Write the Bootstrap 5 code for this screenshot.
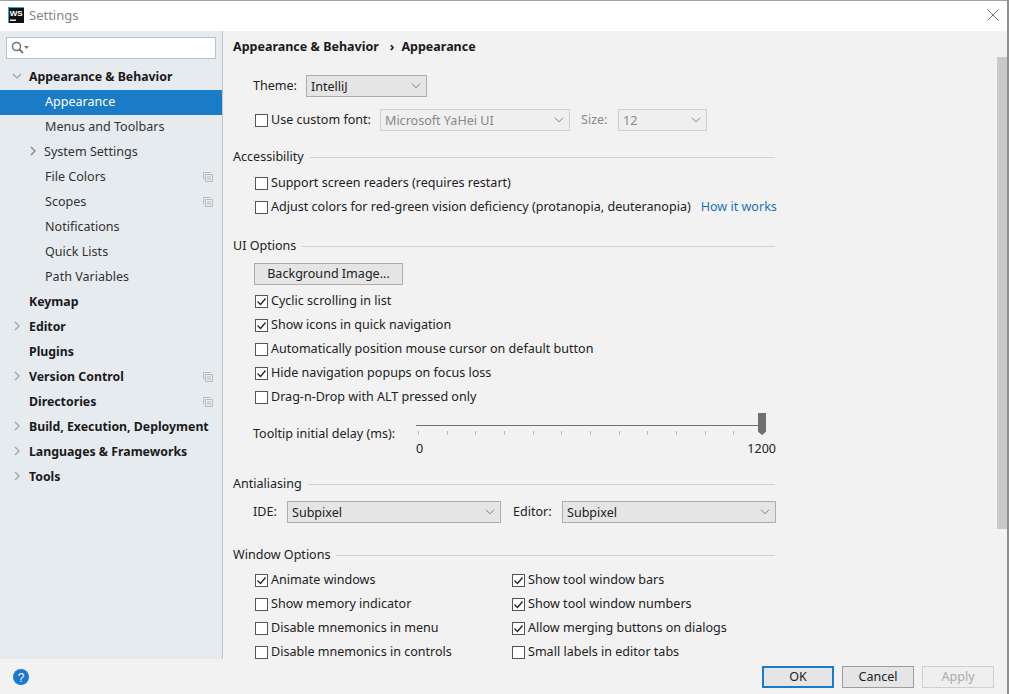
<!DOCTYPE html>
<html lang="en"><head><meta charset="utf-8"><title>Settings</title>
<link href="https://cdn.jsdelivr.net/npm/bootstrap@5.3.0/dist/css/bootstrap.min.css" rel="stylesheet">
<style>
html,body{height:694px;overflow:hidden;background:#8e8e8e}
body{font:12.55px/18px "Noto Sans","Open Sans",sans-serif;color:#222}
.ij-win{width:1007px;height:694px;background:#f2f2f2;border-top:1px solid #a0a0a0}
.ij-title{height:30px;background:#fff;color:#888;font-size:13px;padding:0 0 2px 8px;gap:5px}
.ij-close{margin-left:auto;margin-right:8px}
.ij-main{height:628px}
.ij-side{width:223px;flex:none;background:#e6ebf0;border-right:1px solid #c4c4c4}
.ij-search{margin:6px 6px 5px;width:210px;height:22px;position:relative}
.ij-search .form-control{height:22px;border:1px solid #c0c0c0;border-radius:0;padding:0 0 0 24px;background:#fff;min-height:0}
.ij-search svg{position:absolute;left:5px;top:4px}
.ij-tree{background:transparent;border-radius:0}
.ij-tree .list-group-item{height:25px;padding:0 6px 0 45px;background:transparent;border:0;border-radius:0;display:flex;align-items:center;font-size:12.55px;line-height:25px;color:#333;position:relative;white-space:nowrap}
.ij-tree .list-group-item.active{background:#1a7cc6;color:#fff;margin-top:1px;padding-bottom:2px}
.ij-tree .list-group-item.active + .list-group-item{margin-top:-1px}
.ij-tree .ij-top{padding-left:29px;font-weight:700;color:#1a1a1a;font-size:12.3px}
.ij-tree .ij-exp{padding-left:44px}
.ij-tree svg.ij-arrow{position:absolute;top:7px}
.ij-tree svg.ij-copy{margin-left:auto;margin-right:3px;flex:none}
.ij-body{flex:1;min-width:0;position:relative;overflow:hidden;padding:7px 0 0 10px}
.ij-crumb{font-weight:700;height:18px;line-height:18px;color:#1a1a1a;gap:7px;font-size:12.5px}
.ij-pane{width:542px;padding-left:20px}
.ij-sec{height:18px;margin-left:-20px;gap:6px;line-height:18px}
.ij-sec::after{content:"";flex:1;border-top:1px solid #d0d0d0}
.ij-row{height:24px;gap:3px}
.ij-row .form-check-input{width:13px;height:13px;margin:0 0 0 2px;flex:none;border:1px solid #555;border-radius:0;background-color:#fff;float:none}
.ij-row .form-check-input:checked{background-color:#fff;border-color:#555;background-image:url("data:image/svg+xml,%3csvg xmlns='http://www.w3.org/2000/svg' viewBox='0 0 13 13'%3e%3cpath d='M2.5 6.500l3 3 5-6' fill='none' stroke='%23222' stroke-width='1.3'/%3e%3c/svg%3e");background-size:13px 13px}
.ij-row label{white-space:nowrap;margin:0}
.ij-fixlabel{flex:none;white-space:nowrap}
.form-select.ij-sel{height:22px;min-height:0;padding:1px 0 0 4px;border:1px solid #adadad;border-radius:0;background-color:#e5e5e5;font-size:12.55px;line-height:20px;color:#222;flex:none;background-image:url("data:image/svg+xml,%3csvg xmlns='http://www.w3.org/2000/svg' viewBox='0 0 11 6'%3e%3cpath d='M1 .5l4.500 4.500 4.500-4.500' fill='none' stroke='%23777'/%3e%3c/svg%3e");background-size:10px 6px;background-position:right 5px center}
.form-select.ij-sel:disabled{background-color:#efefef;border-color:#d0d0d0;color:#888;opacity:1}
.ij-dim{color:#888}
.ij-link{color:#1a73b8;text-decoration:none;margin-left:7px;white-space:nowrap}
.btn.ij-btn{height:22px;padding:0;margin-left:1px;border:1px solid #adadad;border-radius:0;background:#e5e5e5;font-size:12.55px;line-height:20px;color:#222}
.ij-slider{width:360px;height:46px;position:relative;flex:none}
.ij-track{height:1px;background:#707070;margin:12px 10px 0 0}
.ij-ticks{height:5px;margin-top:5px;padding-right:13px;padding-left:2px}
.ij-ticks i{width:1px;height:4px;background:#bbb;display:block}
.ij-thumb{position:absolute;right:10px;top:0;width:8px;height:22px;background:#6f6f6f;clip-path:polygon(0 0,100% 0,100% 85%,50% 100%,0 85%)}
.ij-scale{margin-top:4px;line-height:18px}
.ij-scroll{position:absolute;right:0;top:26px;width:10px;height:472px;background:#c9c9c9}
.ij-foot{height:35px;background:#f2f2f2;padding-right:13px;gap:8px}
.btn.ij-act{width:72px;height:22px;padding:0;border:1px solid #9c9c9c;border-radius:0;background:#e5e5e5;font-size:12.55px;line-height:20px;color:#222}
.btn.ij-ok{border:2px solid #1a7cc6;line-height:18px}
.btn.ij-act:disabled{border-color:#d0d0d0;background:#efefef;color:#aaa;opacity:1}
.ij-help{margin-left:13px;margin-right:auto}
.ij-col{width:257px;flex:none}
.ij-gap-theme{height:22px;margin-top:19px}
.ij-gap-font{height:22px;margin-top:12px}
.ij-gap-pick{height:22px;margin-top:8px}
</style></head><body>
<div class="ij-win d-flex flex-column">
<div class="ij-title d-flex align-items-center">
<svg width="16" height="16" viewBox="0 0 16 16"><rect width="16" height="16" fill="#111"/><path d="M.5 16V.5H16" fill="none" stroke="#1fb0d0"/><text x="1.800" y="8.500" font-size="8" font-weight="700" fill="#fff" font-family="Liberation Sans">WS</text><rect x="2" y="12.500" width="6" height="1.400" fill="#fff"/></svg>
<span>Settings</span>
<svg class="ij-close" width="12" height="12" viewBox="0 0 12 12"><path d="M.5.5l11 11M11.500.5l-11 11" stroke="#777" fill="none"/></svg>
</div>
<div class="ij-main d-flex">
<div class="ij-side">
<div class="ij-search"><svg width="18" height="14" viewBox="0 0 18 14"><circle cx="5.500" cy="5.500" r="4" fill="none" stroke="#777" stroke-width="1.600"/><path d="M8.500 8.500l3.500 3.500" stroke="#777" stroke-width="2"/><path d="M13 5h5l-2.500 3z" fill="#777"/></svg><input class="form-control" type="text" aria-label="Search"></div>
<div class="list-group list-group-flush ij-tree">
<div class="list-group-item ij-top"><svg class="ij-arrow" style="left:12px" width="10" height="10" viewBox="0 0 10 10"><path d="M1 3l4 4 4-4" fill="none" stroke="#aaa" stroke-width="1.500"/></svg>Appearance &amp; Behavior</div>
<div class="list-group-item active">Appearance</div>
<div class="list-group-item">Menus and Toolbars</div>
<div class="list-group-item ij-exp"><svg class="ij-arrow" style="left:28px" width="10" height="10" viewBox="0 0 10 10"><path d="M3 1l4 4-4 4" fill="none" stroke="#8f8f8f" stroke-width="1.500"/></svg>System Settings</div>
<div class="list-group-item">File Colors<svg class="ij-copy" width="10" height="10" viewBox="0 0 10 10"><path d="M.5 7.500v-7h7M2.500 2.500h7v7h-7zM4 5h4M4 7h4" fill="none" stroke="#bbb"/></svg></div>
<div class="list-group-item">Scopes<svg class="ij-copy" width="10" height="10" viewBox="0 0 10 10"><path d="M.5 7.500v-7h7M2.500 2.500h7v7h-7zM4 5h4M4 7h4" fill="none" stroke="#bbb"/></svg></div>
<div class="list-group-item">Notifications</div>
<div class="list-group-item">Quick Lists</div>
<div class="list-group-item">Path Variables</div>
<div class="list-group-item ij-top">Keymap</div>
<div class="list-group-item ij-top"><svg class="ij-arrow" style="left:12px" width="10" height="10" viewBox="0 0 10 10"><path d="M3 1l4 4-4 4" fill="none" stroke="#aaa" stroke-width="1.500"/></svg>Editor</div>
<div class="list-group-item ij-top">Plugins</div>
<div class="list-group-item ij-top"><svg class="ij-arrow" style="left:12px" width="10" height="10" viewBox="0 0 10 10"><path d="M3 1l4 4-4 4" fill="none" stroke="#aaa" stroke-width="1.500"/></svg>Version Control<svg class="ij-copy" width="10" height="10" viewBox="0 0 10 10"><path d="M.5 7.500v-7h7M2.500 2.500h7v7h-7zM4 5h4M4 7h4" fill="none" stroke="#bbb"/></svg></div>
<div class="list-group-item ij-top">Directories<svg class="ij-copy" width="10" height="10" viewBox="0 0 10 10"><path d="M.5 7.500v-7h7M2.500 2.500h7v7h-7zM4 5h4M4 7h4" fill="none" stroke="#bbb"/></svg></div>
<div class="list-group-item ij-top"><svg class="ij-arrow" style="left:12px" width="10" height="10" viewBox="0 0 10 10"><path d="M3 1l4 4-4 4" fill="none" stroke="#aaa" stroke-width="1.500"/></svg>Build, Execution, Deployment</div>
<div class="list-group-item ij-top"><svg class="ij-arrow" style="left:12px" width="10" height="10" viewBox="0 0 10 10"><path d="M3 1l4 4-4 4" fill="none" stroke="#aaa" stroke-width="1.500"/></svg>Languages &amp; Frameworks</div>
<div class="list-group-item ij-top"><svg class="ij-arrow" style="left:12px" width="10" height="10" viewBox="0 0 10 10"><path d="M3 1l4 4-4 4" fill="none" stroke="#aaa" stroke-width="1.500"/></svg>Tools</div>
</div></div>
<div class="ij-body">
<div class="ij-crumb d-flex"><span>Appearance &amp; Behavior</span><span class="ms-1">›</span><span>Appearance</span></div>
<div class="ij-pane">
<div class="d-flex align-items-center ij-gap-theme"><span class="ij-fixlabel" style="width:53px">Theme:</span><select class="form-select ij-sel" style="width:121px"><option>IntelliJ</option></select></div>
<div class="ij-row d-flex align-items-center ij-gap-font"><input class="form-check-input" type="checkbox" id="a1"><label for="a1" style="width:106px;flex:none">Use custom font:</label><select class="form-select ij-sel" disabled style="width:190px"><option>Microsoft YaHei UI</option></select><span class="ij-dim ij-fixlabel" style="margin-left:8px;width:34px">Size:</span><select class="form-select ij-sel" disabled style="width:89px"><option>12</option></select></div>
<div class="ij-sec d-flex align-items-center" style="margin-top:17px">Accessibility</div>
<div class="ij-row d-flex align-items-center" style="margin-top:5px"><input class="form-check-input" type="checkbox" id="a2"><label for="a2">Support screen readers (requires restart)</label></div>
<div class="ij-row d-flex align-items-center"><input class="form-check-input" type="checkbox" id="a3"><label for="a3">Adjust colors for red-green vision deficiency (protanopia, deuteranopia)</label><a class="ij-link" href="#">How it works</a></div>
<div class="ij-sec d-flex align-items-center" style="margin-top:18px">UI Options</div>
<button class="btn ij-btn d-block" style="width:149px;margin-top:8px" type="button">Background Image...</button>
<div class="ij-row d-flex align-items-center" style="margin-top:4px"><input class="form-check-input" type="checkbox" id="b1" checked><label for="b1">Cyclic scrolling in list</label></div>
<div class="ij-row d-flex align-items-center"><input class="form-check-input" type="checkbox" id="b2" checked><label for="b2">Show icons in quick navigation</label></div>
<div class="ij-row d-flex align-items-center"><input class="form-check-input" type="checkbox" id="b3"><label for="b3">Automatically position mouse cursor on default button</label></div>
<div class="ij-row d-flex align-items-center"><input class="form-check-input" type="checkbox" id="b4" checked><label for="b4">Hide navigation popups on focus loss</label></div>
<div class="ij-row d-flex align-items-center"><input class="form-check-input" type="checkbox" id="b5"><label for="b5">Drag-n-Drop with ALT pressed only</label></div>
<div class="d-flex" style="margin-top:4px;height:46px"><span class="ij-fixlabel" style="width:163px;margin-top:12px">Tooltip initial delay (ms):</span>
<div class="ij-slider"><div class="ij-track"></div><div class="ij-ticks d-flex justify-content-between"><i></i><i></i><i></i><i></i><i></i><i></i><i></i><i></i><i></i><i></i><i></i><i></i><i></i></div><div class="ij-thumb"></div><div class="ij-scale d-flex justify-content-between"><span>0</span><span>1200</span></div></div></div>
<div class="ij-sec d-flex align-items-center" style="margin-top:16px">Antialiasing</div>
<div class="d-flex align-items-center ij-gap-pick"><span class="ij-fixlabel" style="width:34px">IDE:</span><select class="form-select ij-sel" style="width:214px"><option>Subpixel</option></select><span class="ij-fixlabel" style="margin-left:12px;width:49px">Editor:</span><select class="form-select ij-sel" style="width:214px"><option>Subpixel</option></select></div>
<div class="ij-sec d-flex align-items-center" style="margin-top:23px">Window Options</div>
<div class="d-flex" style="margin-top:4px">
<div class="ij-col">
<div class="ij-row d-flex align-items-center"><input class="form-check-input" type="checkbox" id="c1" checked><label for="c1">Animate windows</label></div>
<div class="ij-row d-flex align-items-center"><input class="form-check-input" type="checkbox" id="c2"><label for="c2">Show memory indicator</label></div>
<div class="ij-row d-flex align-items-center"><input class="form-check-input" type="checkbox" id="c3"><label for="c3">Disable mnemonics in menu</label></div>
<div class="ij-row d-flex align-items-center"><input class="form-check-input" type="checkbox" id="c4"><label for="c4">Disable mnemonics in controls</label></div>
</div>
<div class="ij-col">
<div class="ij-row d-flex align-items-center"><input class="form-check-input" type="checkbox" id="d1" checked><label for="d1">Show tool window bars</label></div>
<div class="ij-row d-flex align-items-center"><input class="form-check-input" type="checkbox" id="d2" checked><label for="d2">Show tool window numbers</label></div>
<div class="ij-row d-flex align-items-center"><input class="form-check-input" type="checkbox" id="d3" checked><label for="d3">Allow merging buttons on dialogs</label></div>
<div class="ij-row d-flex align-items-center"><input class="form-check-input" type="checkbox" id="d4"><label for="d4">Small labels in editor tabs</label></div>
</div></div>
</div>
<div class="ij-scroll"></div>
</div></div>
<div class="ij-foot d-flex align-items-center">
<svg class="ij-help" width="16" height="16" viewBox="0 0 16 16"><circle cx="8" cy="8" r="8" fill="#1a78d0"/><text x="8" y="12.500" text-anchor="middle" font-size="12" fill="#fff" font-family="Liberation Sans">?</text></svg>
<button class="btn ij-act ij-ok" type="button">OK</button><button class="btn ij-act" type="button">Cancel</button><button class="btn ij-act" type="button" disabled>Apply</button>
</div></div>
<script src="https://cdn.jsdelivr.net/npm/bootstrap@5.3.0/dist/js/bootstrap.bundle.min.js"></script>
</body></html>
